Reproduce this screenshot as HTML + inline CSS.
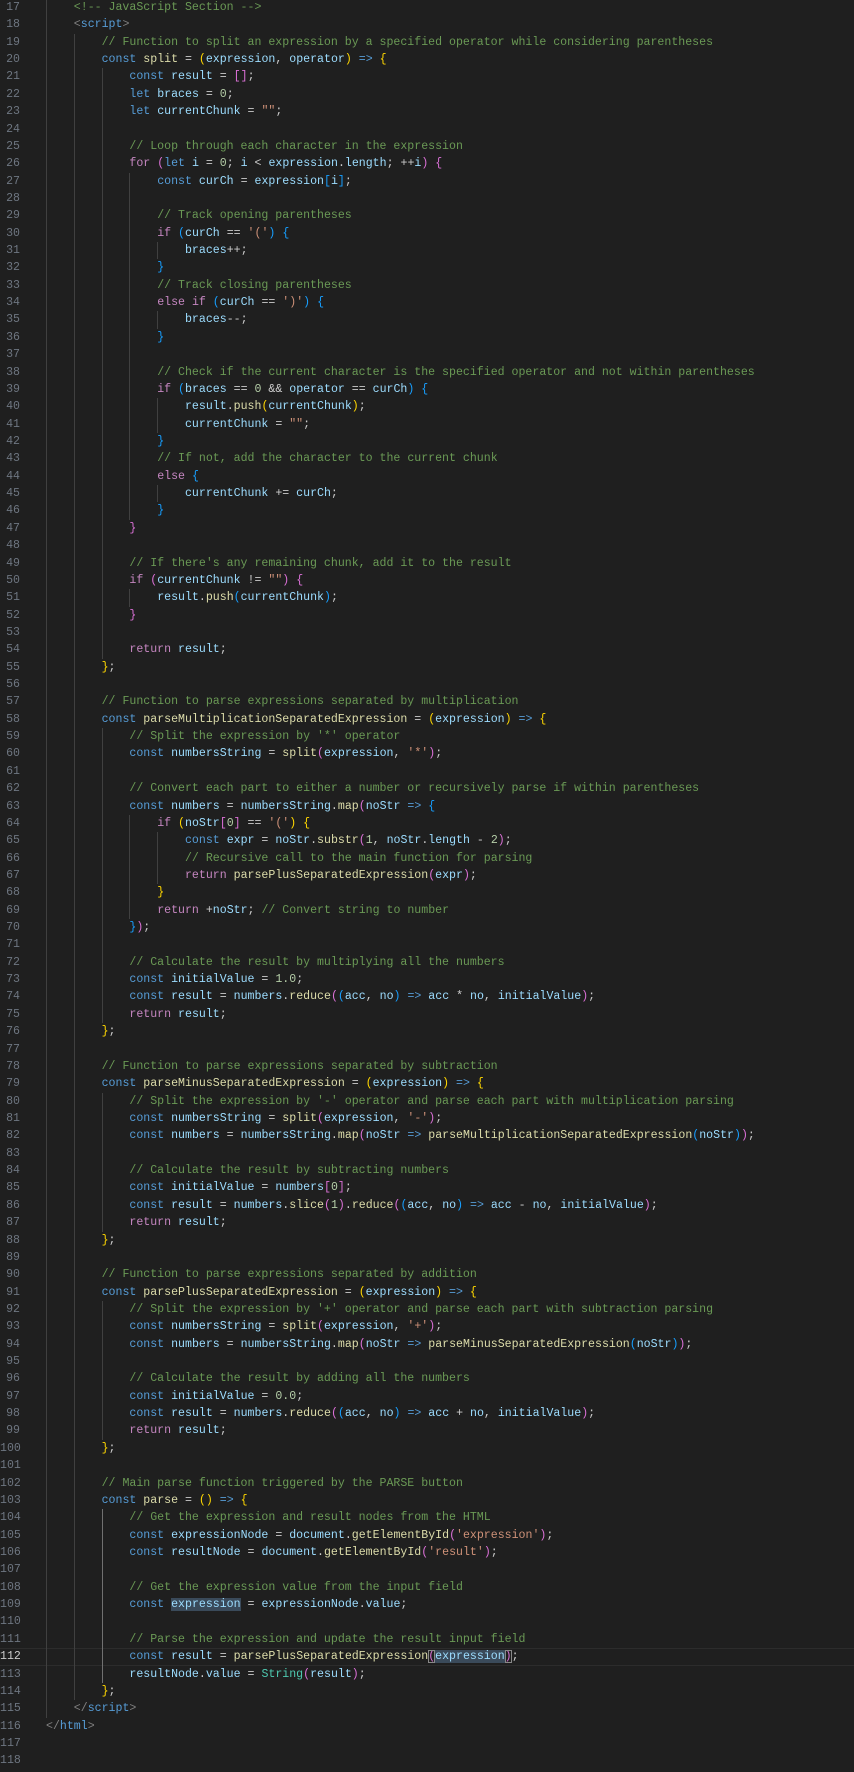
<!DOCTYPE html>
<html><head><meta charset="utf-8"><style>
html,body{margin:0;padding:0;background:#1f1f1f;width:854px;height:1772px;overflow:hidden}
#c{position:absolute;top:-1px;left:0;width:854px;font-family:"Liberation Mono","DejaVu Sans Mono",monospace;font-size:11.58px;line-height:17.36px;color:#cccccc}
.l{position:relative;height:17.36px;padding-left:46px;white-space:pre}
.l b{position:absolute;left:0;width:20px;text-align:right;font-weight:normal;color:#6e7681}
.l.cur{box-shadow:inset 0 1px #2c2c2c,inset 0 -1px #2c2c2c}
.l.cur b{color:#cccccc}
i{display:inline-block;width:27.8px;height:17.36px;vertical-align:top;box-shadow:inset 1px 0 #404040}
i.a{box-shadow:inset 1px 0 #707070}
.k{color:#569cd6}.c{color:#c586c0}.v{color:#9cdcfe}.f{color:#dcdcaa}.s{color:#ce9178}.n{color:#b5cea8}.m{color:#6a9955}.t{color:#4ec9b0}.g{color:#808080}
.b1{color:#ffd700}.b2{color:#da70d6}.b3{color:#179fff}
.h{background:#3a4a5a}
.bx{outline:1px solid #888;outline-offset:-1px}
</style></head><body><div id="c">
<div class="l"><b>17</b><i></i><span class="m">&lt;!-- JavaScript Section --&gt;</span></div>
<div class="l"><b>18</b><i></i><span class="g">&lt;</span><span class="k">script</span><span class="g">&gt;</span></div>
<div class="l"><b>19</b><i></i><i></i><span class="m">// Function to split an expression by a specified operator while considering parentheses</span></div>
<div class="l"><b>20</b><i></i><i></i><span class="k">const</span> <span class="f">split</span> = <span class="b1">(</span><span class="v">expression</span>, <span class="v">operator</span><span class="b1">)</span> <span class="k">=&gt;</span> <span class="b1">{</span></div>
<div class="l"><b>21</b><i></i><i></i><i></i><span class="k">const</span> <span class="v">result</span> = <span class="b2">[]</span>;</div>
<div class="l"><b>22</b><i></i><i></i><i></i><span class="k">let</span> <span class="v">braces</span> = <span class="n">0</span>;</div>
<div class="l"><b>23</b><i></i><i></i><i></i><span class="k">let</span> <span class="v">currentChunk</span> = <span class="s">""</span>;</div>
<div class="l"><b>24</b><i></i><i></i><i></i></div>
<div class="l"><b>25</b><i></i><i></i><i></i><span class="m">// Loop through each character in the expression</span></div>
<div class="l"><b>26</b><i></i><i></i><i></i><span class="c">for</span> <span class="b2">(</span><span class="k">let</span> <span class="v">i</span> = <span class="n">0</span>; <span class="v">i</span> &lt; <span class="v">expression</span>.<span class="v">length</span>; ++<span class="v">i</span><span class="b2">)</span> <span class="b2">{</span></div>
<div class="l"><b>27</b><i></i><i></i><i></i><i></i><span class="k">const</span> <span class="v">curCh</span> = <span class="v">expression</span><span class="b3">[</span><span class="v">i</span><span class="b3">]</span>;</div>
<div class="l"><b>28</b><i></i><i></i><i></i><i></i></div>
<div class="l"><b>29</b><i></i><i></i><i></i><i></i><span class="m">// Track opening parentheses</span></div>
<div class="l"><b>30</b><i></i><i></i><i></i><i></i><span class="c">if</span> <span class="b3">(</span><span class="v">curCh</span> == <span class="s">'('</span><span class="b3">)</span> <span class="b3">{</span></div>
<div class="l"><b>31</b><i></i><i></i><i></i><i></i><i></i><span class="v">braces</span>++;</div>
<div class="l"><b>32</b><i></i><i></i><i></i><i></i><span class="b3">}</span></div>
<div class="l"><b>33</b><i></i><i></i><i></i><i></i><span class="m">// Track closing parentheses</span></div>
<div class="l"><b>34</b><i></i><i></i><i></i><i></i><span class="c">else</span> <span class="c">if</span> <span class="b3">(</span><span class="v">curCh</span> == <span class="s">')'</span><span class="b3">)</span> <span class="b3">{</span></div>
<div class="l"><b>35</b><i></i><i></i><i></i><i></i><i></i><span class="v">braces</span>--;</div>
<div class="l"><b>36</b><i></i><i></i><i></i><i></i><span class="b3">}</span></div>
<div class="l"><b>37</b><i></i><i></i><i></i><i></i></div>
<div class="l"><b>38</b><i></i><i></i><i></i><i></i><span class="m">// Check if the current character is the specified operator and not within parentheses</span></div>
<div class="l"><b>39</b><i></i><i></i><i></i><i></i><span class="c">if</span> <span class="b3">(</span><span class="v">braces</span> == <span class="n">0</span> &amp;&amp; <span class="v">operator</span> == <span class="v">curCh</span><span class="b3">)</span> <span class="b3">{</span></div>
<div class="l"><b>40</b><i></i><i></i><i></i><i></i><i></i><span class="v">result</span>.<span class="f">push</span><span class="b1">(</span><span class="v">currentChunk</span><span class="b1">)</span>;</div>
<div class="l"><b>41</b><i></i><i></i><i></i><i></i><i></i><span class="v">currentChunk</span> = <span class="s">""</span>;</div>
<div class="l"><b>42</b><i></i><i></i><i></i><i></i><span class="b3">}</span></div>
<div class="l"><b>43</b><i></i><i></i><i></i><i></i><span class="m">// If not, add the character to the current chunk</span></div>
<div class="l"><b>44</b><i></i><i></i><i></i><i></i><span class="c">else</span> <span class="b3">{</span></div>
<div class="l"><b>45</b><i></i><i></i><i></i><i></i><i></i><span class="v">currentChunk</span> += <span class="v">curCh</span>;</div>
<div class="l"><b>46</b><i></i><i></i><i></i><i></i><span class="b3">}</span></div>
<div class="l"><b>47</b><i></i><i></i><i></i><span class="b2">}</span></div>
<div class="l"><b>48</b><i></i><i></i><i></i></div>
<div class="l"><b>49</b><i></i><i></i><i></i><span class="m">// If there's any remaining chunk, add it to the result</span></div>
<div class="l"><b>50</b><i></i><i></i><i></i><span class="c">if</span> <span class="b2">(</span><span class="v">currentChunk</span> != <span class="s">""</span><span class="b2">)</span> <span class="b2">{</span></div>
<div class="l"><b>51</b><i></i><i></i><i></i><i></i><span class="v">result</span>.<span class="f">push</span><span class="b3">(</span><span class="v">currentChunk</span><span class="b3">)</span>;</div>
<div class="l"><b>52</b><i></i><i></i><i></i><span class="b2">}</span></div>
<div class="l"><b>53</b><i></i><i></i><i></i></div>
<div class="l"><b>54</b><i></i><i></i><i></i><span class="c">return</span> <span class="v">result</span>;</div>
<div class="l"><b>55</b><i></i><i></i><span class="b1">}</span>;</div>
<div class="l"><b>56</b><i></i><i></i></div>
<div class="l"><b>57</b><i></i><i></i><span class="m">// Function to parse expressions separated by multiplication</span></div>
<div class="l"><b>58</b><i></i><i></i><span class="k">const</span> <span class="f">parseMultiplicationSeparatedExpression</span> = <span class="b1">(</span><span class="v">expression</span><span class="b1">)</span> <span class="k">=&gt;</span> <span class="b1">{</span></div>
<div class="l"><b>59</b><i></i><i></i><i></i><span class="m">// Split the expression by '*' operator</span></div>
<div class="l"><b>60</b><i></i><i></i><i></i><span class="k">const</span> <span class="v">numbersString</span> = <span class="f">split</span><span class="b2">(</span><span class="v">expression</span>, <span class="s">'*'</span><span class="b2">)</span>;</div>
<div class="l"><b>61</b><i></i><i></i><i></i></div>
<div class="l"><b>62</b><i></i><i></i><i></i><span class="m">// Convert each part to either a number or recursively parse if within parentheses</span></div>
<div class="l"><b>63</b><i></i><i></i><i></i><span class="k">const</span> <span class="v">numbers</span> = <span class="v">numbersString</span>.<span class="f">map</span><span class="b2">(</span><span class="v">noStr</span> <span class="k">=&gt;</span> <span class="b3">{</span></div>
<div class="l"><b>64</b><i></i><i></i><i></i><i></i><span class="c">if</span> <span class="b1">(</span><span class="v">noStr</span><span class="b2">[</span><span class="n">0</span><span class="b2">]</span> == <span class="s">'('</span><span class="b1">)</span> <span class="b1">{</span></div>
<div class="l"><b>65</b><i></i><i></i><i></i><i></i><i></i><span class="k">const</span> <span class="v">expr</span> = <span class="v">noStr</span>.<span class="f">substr</span><span class="b2">(</span><span class="n">1</span>, <span class="v">noStr</span>.<span class="v">length</span> - <span class="n">2</span><span class="b2">)</span>;</div>
<div class="l"><b>66</b><i></i><i></i><i></i><i></i><i></i><span class="m">// Recursive call to the main function for parsing</span></div>
<div class="l"><b>67</b><i></i><i></i><i></i><i></i><i></i><span class="c">return</span> <span class="f">parsePlusSeparatedExpression</span><span class="b2">(</span><span class="v">expr</span><span class="b2">)</span>;</div>
<div class="l"><b>68</b><i></i><i></i><i></i><i></i><span class="b1">}</span></div>
<div class="l"><b>69</b><i></i><i></i><i></i><i></i><span class="c">return</span> +<span class="v">noStr</span>; <span class="m">// Convert string to number</span></div>
<div class="l"><b>70</b><i></i><i></i><i></i><span class="b3">}</span><span class="b2">)</span>;</div>
<div class="l"><b>71</b><i></i><i></i><i></i></div>
<div class="l"><b>72</b><i></i><i></i><i></i><span class="m">// Calculate the result by multiplying all the numbers</span></div>
<div class="l"><b>73</b><i></i><i></i><i></i><span class="k">const</span> <span class="v">initialValue</span> = <span class="n">1.0</span>;</div>
<div class="l"><b>74</b><i></i><i></i><i></i><span class="k">const</span> <span class="v">result</span> = <span class="v">numbers</span>.<span class="f">reduce</span><span class="b2">(</span><span class="b3">(</span><span class="v">acc</span>, <span class="v">no</span><span class="b3">)</span> <span class="k">=&gt;</span> <span class="v">acc</span> * <span class="v">no</span>, <span class="v">initialValue</span><span class="b2">)</span>;</div>
<div class="l"><b>75</b><i></i><i></i><i></i><span class="c">return</span> <span class="v">result</span>;</div>
<div class="l"><b>76</b><i></i><i></i><span class="b1">}</span>;</div>
<div class="l"><b>77</b><i></i><i></i></div>
<div class="l"><b>78</b><i></i><i></i><span class="m">// Function to parse expressions separated by subtraction</span></div>
<div class="l"><b>79</b><i></i><i></i><span class="k">const</span> <span class="f">parseMinusSeparatedExpression</span> = <span class="b1">(</span><span class="v">expression</span><span class="b1">)</span> <span class="k">=&gt;</span> <span class="b1">{</span></div>
<div class="l"><b>80</b><i></i><i></i><i></i><span class="m">// Split the expression by '-' operator and parse each part with multiplication parsing</span></div>
<div class="l"><b>81</b><i></i><i></i><i></i><span class="k">const</span> <span class="v">numbersString</span> = <span class="f">split</span><span class="b2">(</span><span class="v">expression</span>, <span class="s">'-'</span><span class="b2">)</span>;</div>
<div class="l"><b>82</b><i></i><i></i><i></i><span class="k">const</span> <span class="v">numbers</span> = <span class="v">numbersString</span>.<span class="f">map</span><span class="b2">(</span><span class="v">noStr</span> <span class="k">=&gt;</span> <span class="f">parseMultiplicationSeparatedExpression</span><span class="b3">(</span><span class="v">noStr</span><span class="b3">)</span><span class="b2">)</span>;</div>
<div class="l"><b>83</b><i></i><i></i><i></i></div>
<div class="l"><b>84</b><i></i><i></i><i></i><span class="m">// Calculate the result by subtracting numbers</span></div>
<div class="l"><b>85</b><i></i><i></i><i></i><span class="k">const</span> <span class="v">initialValue</span> = <span class="v">numbers</span><span class="b2">[</span><span class="n">0</span><span class="b2">]</span>;</div>
<div class="l"><b>86</b><i></i><i></i><i></i><span class="k">const</span> <span class="v">result</span> = <span class="v">numbers</span>.<span class="f">slice</span><span class="b2">(</span><span class="n">1</span><span class="b2">)</span>.<span class="f">reduce</span><span class="b2">(</span><span class="b3">(</span><span class="v">acc</span>, <span class="v">no</span><span class="b3">)</span> <span class="k">=&gt;</span> <span class="v">acc</span> - <span class="v">no</span>, <span class="v">initialValue</span><span class="b2">)</span>;</div>
<div class="l"><b>87</b><i></i><i></i><i></i><span class="c">return</span> <span class="v">result</span>;</div>
<div class="l"><b>88</b><i></i><i></i><span class="b1">}</span>;</div>
<div class="l"><b>89</b><i></i><i></i></div>
<div class="l"><b>90</b><i></i><i></i><span class="m">// Function to parse expressions separated by addition</span></div>
<div class="l"><b>91</b><i></i><i></i><span class="k">const</span> <span class="f">parsePlusSeparatedExpression</span> = <span class="b1">(</span><span class="v">expression</span><span class="b1">)</span> <span class="k">=&gt;</span> <span class="b1">{</span></div>
<div class="l"><b>92</b><i></i><i></i><i></i><span class="m">// Split the expression by '+' operator and parse each part with subtraction parsing</span></div>
<div class="l"><b>93</b><i></i><i></i><i></i><span class="k">const</span> <span class="v">numbersString</span> = <span class="f">split</span><span class="b2">(</span><span class="v">expression</span>, <span class="s">'+'</span><span class="b2">)</span>;</div>
<div class="l"><b>94</b><i></i><i></i><i></i><span class="k">const</span> <span class="v">numbers</span> = <span class="v">numbersString</span>.<span class="f">map</span><span class="b2">(</span><span class="v">noStr</span> <span class="k">=&gt;</span> <span class="f">parseMinusSeparatedExpression</span><span class="b3">(</span><span class="v">noStr</span><span class="b3">)</span><span class="b2">)</span>;</div>
<div class="l"><b>95</b><i></i><i></i><i></i></div>
<div class="l"><b>96</b><i></i><i></i><i></i><span class="m">// Calculate the result by adding all the numbers</span></div>
<div class="l"><b>97</b><i></i><i></i><i></i><span class="k">const</span> <span class="v">initialValue</span> = <span class="n">0.0</span>;</div>
<div class="l"><b>98</b><i></i><i></i><i></i><span class="k">const</span> <span class="v">result</span> = <span class="v">numbers</span>.<span class="f">reduce</span><span class="b2">(</span><span class="b3">(</span><span class="v">acc</span>, <span class="v">no</span><span class="b3">)</span> <span class="k">=&gt;</span> <span class="v">acc</span> + <span class="v">no</span>, <span class="v">initialValue</span><span class="b2">)</span>;</div>
<div class="l"><b>99</b><i></i><i></i><i></i><span class="c">return</span> <span class="v">result</span>;</div>
<div class="l"><b>100</b><i></i><i></i><span class="b1">}</span>;</div>
<div class="l"><b>101</b><i></i><i></i></div>
<div class="l"><b>102</b><i></i><i></i><span class="m">// Main parse function triggered by the PARSE button</span></div>
<div class="l"><b>103</b><i></i><i></i><span class="k">const</span> <span class="f">parse</span> = <span class="b1">()</span> <span class="k">=&gt;</span> <span class="b1">{</span></div>
<div class="l"><b>104</b><i></i><i></i><i class="a"></i><span class="m">// Get the expression and result nodes from the HTML</span></div>
<div class="l"><b>105</b><i></i><i></i><i class="a"></i><span class="k">const</span> <span class="v">expressionNode</span> = <span class="v">document</span>.<span class="f">getElementById</span><span class="b2">(</span><span class="s">'expression'</span><span class="b2">)</span>;</div>
<div class="l"><b>106</b><i></i><i></i><i class="a"></i><span class="k">const</span> <span class="v">resultNode</span> = <span class="v">document</span>.<span class="f">getElementById</span><span class="b2">(</span><span class="s">'result'</span><span class="b2">)</span>;</div>
<div class="l"><b>107</b><i></i><i></i><i class="a"></i></div>
<div class="l"><b>108</b><i></i><i></i><i class="a"></i><span class="m">// Get the expression value from the input field</span></div>
<div class="l"><b>109</b><i></i><i></i><i class="a"></i><span class="k">const</span> <span class="v h">expression</span> = <span class="v">expressionNode</span>.<span class="v">value</span>;</div>
<div class="l"><b>110</b><i></i><i></i><i class="a"></i></div>
<div class="l"><b>111</b><i></i><i></i><i class="a"></i><span class="m">// Parse the expression and update the result input field</span></div>
<div class="l cur"><b>112</b><i></i><i></i><i class="a"></i><span class="k">const</span> <span class="v">result</span> = <span class="f">parsePlusSeparatedExpression</span><span class="b2 bx">(</span><span class="v h">expression</span><span class="b2 bx">)</span>;</div>
<div class="l"><b>113</b><i></i><i></i><i class="a"></i><span class="v">resultNode</span>.<span class="v">value</span> = <span class="t">String</span><span class="b2">(</span><span class="v">result</span><span class="b2">)</span>;</div>
<div class="l"><b>114</b><i></i><i></i><span class="b1">}</span>;</div>
<div class="l"><b>115</b><i></i><span class="g">&lt;/</span><span class="k">script</span><span class="g">&gt;</span></div>
<div class="l"><b>116</b><span class="g">&lt;/</span><span class="k">html</span><span class="g">&gt;</span></div>
<div class="l"><b>117</b></div>
<div class="l"><b>118</b></div>
</div></body></html>
